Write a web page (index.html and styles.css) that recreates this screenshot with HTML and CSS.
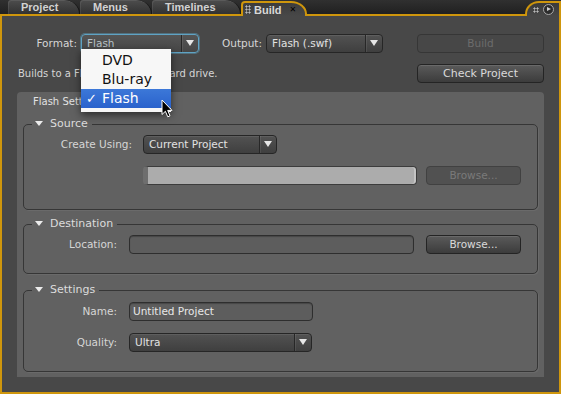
FILE: index.html
```html
<!DOCTYPE html>
<html lang="en">
<head>
	<meta charset="UTF-8">
	<title>Build</title>
	<link rel="stylesheet" href="styles.css">
</head>
<body>

	<div class="window">
		<!-- 标签栏 -->
		<div class="tabbar">
			<div class="tab">Project</div>
			<div class="tab">Menus</div>
			<div class="tab">Timelines</div>
			<div class="tab active"><span class="grip"></span>Build<span class="close">&#x2715;</span></div>
			<div class="tabfill"></div>
			<div class="corner">
				<span class="grip"></span>
				<span class="play"></span>
			</div>
		</div>

		<div class="panel">
			<div class="row">
				<label class="lbl lbl-format">Format:</label>
				<div class="select sel-format focus"><span class="val">Flash</span><span class="arrow"></span></div>
				<label class="lbl lbl-output">Output:</label>
				<div class="select sel-output"><span class="val">Flash (.swf)</span><span class="arrow"></span></div>
				<button class="btn disabled btn-build">Build</button>
			</div>

			<div class="row row-info">
				<p class="info">Builds to a Flash file on your hard drive.</p>
				<button class="btn btn-check">Check Project</button>
			</div>

			<div class="settings">
				<div class="settings-title">Flash Settings</div>

				<fieldset class="group group-source">
					<legend><span class="tri"></span>Source</legend>
					<div class="field">
						<label class="flbl">Create Using:</label>
						<div class="select sel-create"><span class="val">Current Project</span><span class="arrow"></span></div>
					</div>
					<div class="field field-gap">
						<div class="progress"></div>
						<button class="btn disabled btn-browse">Browse...</button>
					</div>
				</fieldset>

				<fieldset class="group group-dest">
					<legend><span class="tri"></span>Destination</legend>
					<div class="field">
						<label class="flbl">Location:</label>
						<div class="input input-loc"></div>
						<button class="btn btn-browse">Browse...</button>
					</div>
				</fieldset>

				<fieldset class="group group-settings">
					<legend><span class="tri"></span>Settings</legend>
					<div class="field">
						<label class="flbl">Name:</label>
						<div class="input input-name">Untitled Project</div>
					</div>
					<div class="field field-gap">
						<label class="flbl">Quality:</label>
						<div class="select sel-quality"><span class="val">Ultra</span><span class="arrow"></span></div>
					</div>
				</fieldset>
			</div>
		</div>

		<!-- 弹出的下拉菜单 -->
		<ul class="menu">
			<li><span class="check"></span>DVD</li>
			<li><span class="check"></span>Blu-ray</li>
			<li class="current"><span class="check">&#x2713;</span>Flash</li>
		</ul>

		<svg class="cursor" width="12" height="19" viewBox="0 0 12 19">
			<path d="M1 1 L1 15.5 L4.4 12.3 L6.8 17.8 L9 16.8 L6.7 11.4 L11 11.4 Z" fill="#000" stroke="#fff" stroke-width="1" stroke-linejoin="round"/>
		</svg>
	</div>

</body>
</html>
```

FILE: styles.css
```css
*{
	margin: 0;
	padding: 0;
	box-sizing: border-box;
}

body{
	width: 561px;
	height: 394px;
	overflow: hidden;
	background: #222;
	font-family: "DejaVu Sans", Verdana, sans-serif;
	font-size: 10.5px;
	color: #d6d6d6;
}

.window{
	position: relative;
	width: 561px;
	height: 394px;
	display: flex;
	flex-direction: column;
	background: linear-gradient(#303030, #1e1e1e 16px);
}

/* 标签栏 */
.tabbar{
	display: flex;
	align-items: flex-end;
	height: 14px;
	padding-left: 8px;
	font-family: "Liberation Sans", Arial, sans-serif;
	font-weight: bold;
	font-size: 11px;
}

.tab{
	height: 14px;
	line-height: 14px;
	padding-left: 13px;
	color: #d2d2d2;
	background: linear-gradient(#4d4d4d, #323232);
	border-radius: 3px 16px 0 0 / 3px 14px 0 0;
	border-right: 1px solid #141414;
	box-shadow: inset 1px 1px 0 rgba(255,255,255,0.08);
}

.tab:nth-child(1){ width: 72px; }
.tab:nth-child(2){ width: 72px; }
.tab:nth-child(3){ width: 89px; }

.tab.active{
	position: relative;
	z-index: 2;
	width: 66px;
	height: 15px;
	line-height: 12px;
	margin-bottom: -2px;
	padding-left: 2px;
	display: flex;
	align-items: center;
	color: #d8d8d8;
	background: linear-gradient(#3c3c3c, #484848);
	border: 2px solid #cf960c;
	border-bottom: none;
	border-radius: 4px 16px 0 0 / 4px 13px 0 0;
	box-shadow: none;
}

.grip{
	width: 6px;
	height: 9px;
	margin-right: 3px;
	background-image: radial-gradient(circle, #b8b8b8 0.9px, transparent 1.2px);
	background-size: 3px 3px;
}

.close{
	margin-left: 8px;
	font-size: 8px;
	color: #000;
	font-family: "DejaVu Sans", sans-serif;
}

.tabfill{
	flex: 1;
}

.corner{
	position: relative;
	z-index: 2;
	width: 36px;
	height: 15px;
	margin-bottom: -2px;
	display: flex;
	align-items: center;
	padding-left: 6px;
	background: linear-gradient(#3a3a3a, #484848);
	border: 2px solid #cf960c;
	border-bottom: none;
	border-radius: 14px 0 0 0 / 13px 0 0 0;
}

.corner .grip{
	width: 6px;
	height: 6px;
	margin-right: 4px;
}

.play{
	width: 11px;
	height: 11px;
	border-radius: 50%;
	border: 1px solid #a8a8a8;
	background: #2c2c2c;
	position: relative;
}

.play::after{
	content: '';
	position: absolute;
	left: 3px;
	top: 2px;
	border-top: 2.5px solid transparent;
	border-bottom: 2.5px solid transparent;
	border-left: 4px solid #d0d0d0;
}

/* 主面板 */
.panel{
	flex: 1;
	display: flex;
	flex-direction: column;
	background: #484848;
	border: 2px solid #cf960c;
	padding: 18px 15px 15px 15px;
}

.row{
	display: flex;
	align-items: center;
	height: 18px;
}

.row-info{
	margin-top: 12px;
}

.lbl{
	text-align: right;
	margin-right: 4px;
}

.lbl-format{ width: 60px; }
.lbl-output{ width: 63px; }

.info{
	flex: 1;
	padding-left: 1px;
	font-size: 10px;
}

/* 下拉框 */
.select{
	height: 19px;
	display: flex;
	border: 1px solid #262626;
	border-radius: 4px;
	background: linear-gradient(#525252, #3f3f3f);
	box-shadow: inset 0 1px 0 rgba(255,255,255,0.08);
	color: #e2e2e2;
}

.select .val{
	flex: 1;
	padding-left: 5px;
	line-height: 17px;
	white-space: nowrap;
	overflow: hidden;
}

.select .arrow{
	width: 17px;
	border-left: 1px solid #272727;
	box-shadow: inset 1px 0 0 rgba(255,255,255,0.08);
	display: flex;
	align-items: center;
	justify-content: center;
}

.select .arrow::after{
	content: '';
	border-left: 4px solid transparent;
	border-right: 4px solid transparent;
	border-top: 6px solid #e6e6e6;
}

.select.focus{
	border-color: #5fa3c4;
	box-shadow: 0 0 0 1px rgba(95,163,196,0.45);
	background: linear-gradient(#555, #464646);
	color: #b9c2c8;
}

.sel-format{ width: 118px; }
.sel-output{ width: 117px; }
.sel-create{ width: 134px; }
.sel-quality{ width: 183px; }

/* 按钮 */
.btn{
	height: 19px;
	font-family: inherit;
	font-size: 10.5px;
	color: #dadada;
	border: 1px solid #242424;
	border-radius: 4px;
	background: linear-gradient(#5a5a5a, #3c3c3c);
	box-shadow: inset 0 1px 0 rgba(255,255,255,0.1);
}

.btn.disabled{
	color: #6c6c6c;
	background: #474747;
	border-color: #363636;
	box-shadow: none;
}

.btn-build,
.btn-check{
	width: 127px;
	margin-left: auto;
}

.btn-check{
	font-size: 11px;
}

.btn-browse{
	width: 95px;
	margin-left: auto;
}

.btn-browse.disabled{
	color: #7a7a7a;
	background: #515151;
	border-color: #414141;
}

/* Flash Settings 区域 */
.settings{
	flex: 1;
	margin-top: 10px;
	padding: 0 6px 5px;
	background: #616161;
	border-radius: 4px 4px 0 0;
}

.settings-title{
	line-height: 20px;
	padding-left: 10px;
	font-size: 10px;
	color: #e2e2e2;
	margin-bottom: 5px;
}

.group{
	border: 1px solid #363636;
	border-radius: 5px;
	padding: 4px 16px 25px 0;
	box-shadow: 1px 1px 0 rgba(255,255,255,0.06);
}

.group legend{
	margin-left: 8px;
	padding: 0 4px 0 3px;
	line-height: 14px;
	color: #dcdcdc;
	font-size: 11px;
}

.tri{
	display: inline-block;
	vertical-align: middle;
	margin: -2px 7px 0 0;
	border-left: 4px solid transparent;
	border-right: 4px solid transparent;
	border-top: 5px solid #ececec;
}

.group-dest{
	margin-top: 7px;
	padding-bottom: 20px;
}

.group-settings{
	margin-top: 9px;
	padding-top: 5px;
	padding-bottom: 20px;
}

.field{
	display: flex;
	align-items: center;
	height: 18px;
}

.field-gap{
	margin-top: 13px;
}

.flbl{
	width: 93px;
	margin-right: 12px;
	text-align: right;
}

.group-source .flbl{
	width: 108px;
	margin-right: 11px;
}

.group-source .field-gap{
	padding-left: 119px;
}

.progress{
	width: 274px;
	height: 19px;
	background: #acacac;
	border: 1px solid #3c3c3c;
	border-left: 5px solid #6e6e6e;
	border-radius: 4px;
	box-shadow: inset -2px 0 0 #c4c4c4;
}

.input{
	height: 19px;
	border: 1px solid #2e2e2e;
	border-radius: 4px;
	background: #5d5d5d;
	box-shadow: inset 0 1px 1px rgba(0,0,0,0.25);
	padding-left: 3px;
	line-height: 17px;
	color: #e8e8e8;
}

.input-loc{ width: 285px; }
.input-name{ width: 184px; }

/* 下拉菜单(覆盖在上面) */
.menu{
	position: absolute;
	left: 81px;
	top: 49px;
	width: 90px;
	padding: 2px 0 4px;
	list-style: none;
	background: #f7f7f7;
	box-shadow: 0 3px 8px rgba(0,0,0,0.55);
	font-size: 14px;
	color: #111;
	z-index: 5;
}

.menu li{
	display: flex;
	line-height: 19px;
}

.menu li.current{
	background: linear-gradient(#3c78d8, #2a62cc);
	color: #fff;
}

.check{
	width: 21px;
	text-align: center;
	font-size: 13px;
}

.cursor{
	position: absolute;
	left: 161px;
	top: 99px;
	z-index: 6;
}
```
